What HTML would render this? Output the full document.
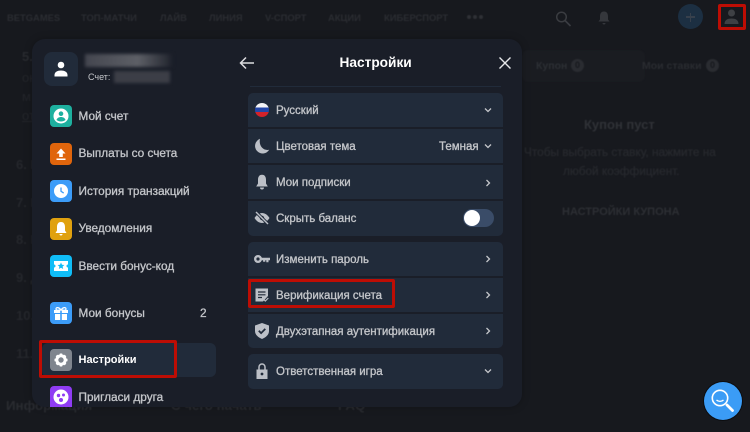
<!DOCTYPE html>
<html lang="ru"><head><meta charset="utf-8"><style>
html,body{margin:0;padding:0}
body{width:750px;height:432px;overflow:hidden;background:#17191e;position:relative;font-family:"Liberation Sans",sans-serif;}
#soft{position:absolute;left:0;top:0;width:750px;height:432px;filter:blur(.3px)}
#back{position:absolute;left:0;top:0;width:750px;height:432px;filter:blur(.6px)}
.a{position:absolute;white-space:nowrap}
.bg{color:#2b2d32;font-weight:bold;font-size:9.4px;top:12px}
.d{color:#2b2d32;font-weight:bold;font-size:13px}
#m{position:absolute;left:32px;top:39px;width:490px;height:368px;background:#1a1e28;border-radius:13px;box-shadow:0 0 8px rgba(0,0,0,.25)}
.ic{position:absolute;left:50px;width:22px;height:22px;border-radius:4px}
.ic svg,.ri svg{position:absolute;left:0;top:0}
.t{position:absolute;left:78.5px;color:#c4c6ca;font-size:11.8px;-webkit-text-stroke:.3px #c4c6ca;white-space:nowrap;line-height:16px}
.r{position:absolute;left:248px;width:255px;background:#212b3a}
.rt{position:absolute;left:276px;color:#c4c6ca;font-size:11.5px;-webkit-text-stroke:.3px #c4c6ca;white-space:nowrap;line-height:16px;margin-top:1px}
.ri{position:absolute;left:253px;width:18px;height:18px}
.ch{position:absolute;left:484px;width:8px;height:8px}
.box{position:absolute;border:3px solid #bd0d04;border-radius:2px;box-sizing:border-box}
.n{position:absolute;width:13px;height:13px;border-radius:50%;background:#2a2c31;color:#17191e;font-size:9px;font-weight:bold;line-height:13px;text-align:center}
</style></head><body>
<div id="soft">
<div id="back">
<div class="a bg" style="left:7px">BETGAMES</div>
<div class="a bg" style="left:81px">ТОП-МАТЧИ</div>
<div class="a bg" style="left:160px">ЛАЙВ</div>
<div class="a bg" style="left:209px">ЛИНИЯ</div>
<div class="a bg" style="left:265px">V-СПОРТ</div>
<div class="a bg" style="left:328px">АКЦИИ</div>
<div class="a bg" style="left:384px">КИБЕРСПОРТ</div>
<div class="a" style="left:467px;top:15px;width:4px;height:4px;border-radius:50%;background:#2f3136;box-shadow:6px 0 #2f3136,12px 0 #2f3136"></div>
<div class="a" style="left:522px;top:50px;width:123px;height:32px;background:#1a1c21;border-radius:6px"></div>
<div class="a d" style="left:536px;top:60px;font-size:10.5px;color:#2c2f34">Купон</div>
<div class="n" style="left:571px;top:59px">0</div>
<div class="a d" style="left:642px;top:60px;font-size:10.5px;color:#2a2c31">Мои ставки</div>
<div class="n" style="left:706px;top:59px">0</div>
<div class="a d" style="left:584px;top:117px;color:#303237">Купон пуст</div>
<div class="a d" style="left:524px;top:145px;font-size:11.8px;color:#27292e;font-weight:normal;-webkit-text-stroke:.3px #27292e">Чтобы выбрать ставку, нажмите на</div>
<div class="a d" style="left:563px;top:164px;font-size:11.8px;color:#27292e;font-weight:normal;-webkit-text-stroke:.3px #27292e">любой коэффициент.</div>
<div class="a d" style="left:562px;top:206px;font-size:11px;color:#2d2f34">НАСТРОЙКИ КУПОНА</div>
<div class="a d" style="left:22px;top:49px;color:#292b30">5.</div>
<div class="a d" style="left:22px;top:70px;font-weight:normal;color:#24262b">он</div>
<div class="a d" style="left:22px;top:89px;font-weight:normal;color:#24262b">м</div>
<div class="a d" style="left:22px;top:108px;font-weight:normal;color:#24262b;text-decoration:underline">от</div>
<div class="a d" style="left:16px;top:157px;color:#25272c">6. В</div>
<div class="a d" style="left:16px;top:195px;color:#25272c">7. П</div>
<div class="a d" style="left:16px;top:232px;color:#25272c">8. И</div>
<div class="a d" style="left:16px;top:270px;color:#25272c">9. Д</div>
<div class="a d" style="left:16px;top:308px;color:#25272c">10.</div>
<div class="a d" style="left:16px;top:346px;color:#25272c">11.</div>
<div class="a" style="left:6px;top:398px;font-size:13.3px;font-weight:bold;color:#2a2c31">Информация</div>
<div class="a" style="left:171px;top:398px;font-size:13.3px;font-weight:bold;color:#2a2c31">С чего начать</div>
<div class="a" style="left:338px;top:398px;font-size:13.3px;font-weight:bold;color:#2a2c31">FAQ</div>
</div>
<svg class="a" style="left:555px;top:10px" width="17" height="17" viewBox="0 0 17 17"><circle cx="6.5" cy="7" r="4.800" fill="none" stroke="#3a3c41" stroke-width="1.500"/><path d="M10 10.500l5.500 5.500" stroke="#3a3c41" stroke-width="1.700"/></svg>
<svg class="a" style="left:596px;top:10px" width="16" height="16" viewBox="0 0 16 16"><path d="M8 1.500c-3 0-4 2.400-4 5v3l-1.500 2h11L12 9.500v-3c0-2.600-1-5-4-5zM6.500 13h3a1.500 1.500 0 01-3 0z" fill="#35373c"/></svg>
<div class="a" style="left:678px;top:4px;width:25px;height:25px;border-radius:50%;background:#1c2f42"></div>
<div class="a" style="left:686px;top:16px;width:9px;height:1.500px;background:#37404c"></div>
<div class="a" style="left:689.700px;top:12.500px;width:1.500px;height:9px;background:#37404c"></div>
<svg class="a" style="left:721px;top:6px" width="21" height="20" viewBox="0 0 21 20"><circle cx="10.500" cy="7" r="3.500" fill="#3e4044"/><path d="M3.500 18c0-4 3-5.500 7-5.500s7 1.500 7 5.500z" fill="#3e4044"/></svg>
<div class="box" style="left:717.500px;top:4px;width:28px;height:26px"></div>

<div id="m"></div>
<div class="a" style="left:44px;top:52px;width:34px;height:34px;border-radius:8px;background:#212b3a"></div>
<svg class="a" style="left:54px;top:61px" width="14" height="16" viewBox="0 0 14 16"><circle cx="7" cy="4" r="3.300" fill="#fff"/><path d="M.5 15.500v-1.500c0-3 3-4.500 6.500-4.500s6.500 1.500 6.500 4.500v1.500z" fill="#fff"/></svg>
<div class="a" style="left:85px;top:54px;width:88px;height:13px;background:linear-gradient(90deg,#44464f,#5d5f66 60%,#2c2f38 92%,#1a1e28);filter:blur(1.500px)"></div>
<div class="a" style="left:88px;top:70px;color:#c4c6ca;font-size:9px;line-height:14px">Счет:</div>
<div class="a" style="left:114px;top:71px;width:56px;height:12px;background:#3c3e47;filter:blur(1.500px)"></div>

<div class="ic" style="top:105px;background:#1eb09f"><svg width="22" height="22" viewBox="0 0 22 22"><circle cx="11" cy="11" r="7.500" fill="#fff"/><circle cx="11" cy="8.700" r="2.300" fill="#1eb09f"/><path d="M6.500 15c.5-2 2.500-3 4.500-3s4 1 4.500 3c-2.500 2-6.500 2-9 0z" fill="#1eb09f"/></svg></div>
<div class="t" style="top:107.500px">Мой счет</div>
<div class="ic" style="top:142.500px;background:#e0650c"><svg width="22" height="22" viewBox="0 0 22 22"><path d="M11 5.500l4.500 5h-2.700V14H9.200v-3.500H6.500z" fill="#fff"/><rect x="6.500" y="15.500" width="9" height="1.500" fill="#fff"/></svg></div>
<div class="t" style="top:145px">Выплаты со счета</div>
<div class="ic" style="top:180px;background:#3c9cf8"><svg width="22" height="22" viewBox="0 0 22 22"><circle cx="11" cy="11" r="7" fill="#fff"/><path d="M11 7.500v3.800l2.700 1.800" fill="none" stroke="#3c9cf8" stroke-width="1.300"/></svg></div>
<div class="t" style="top:182.500px">История транзакций</div>
<div class="ic" style="top:217.500px;background:#e0a10f"><svg width="22" height="22" viewBox="0 0 22 22"><path d="M11 4c-3 0-4 2.500-4 5v3.500L5.500 15h11L15 12.500V9c0-2.500-1-5-4-5zM9.500 16h3a1.500 1.500 0 01-3 0z" fill="#fff"/></svg></div>
<div class="t" style="top:220px">Уведомления</div>
<div class="ic" style="top:255px;background:#10bdf7"><svg width="22" height="22" viewBox="0 0 22 22"><path d="M4 6h14v3.500a1.500 1.500 0 000 3V16H4v-3.500a1.500 1.500 0 000-3z" fill="#fff"/><path d="M11 7.500l1 2.300 2.400.2-1.800 1.600.6 2.400-2.200-1.300-2.200 1.300.6-2.400L7.600 10l2.400-.2z" fill="#10bdf7"/></svg></div>
<div class="t" style="top:257.500px">Ввести бонус-код</div>
<div class="ic" style="top:302px;background:#3c9cf8"><svg width="22" height="22" viewBox="0 0 22 22"><path d="M4 8h14v3H4zM5 12h12v6H5z" fill="#fff"/><rect x="10.200" y="8" width="1.600" height="10" fill="#3c9cf8"/><path d="M11 8c-2-3-5-3-5-1s3 1 5 1zm0 0c2-3 5-3 5-1s-3 1-5 1z" fill="none" stroke="#fff" stroke-width="1.200"/></svg></div>
<div class="t" style="top:304.500px">Мои бонусы</div>
<div class="t" style="top:304.500px;left:200px">2</div>
<div class="a" style="left:42px;top:343px;width:174px;height:34px;border-radius:6px;background:#212b3a"></div>
<div class="ic" style="top:349px;background:#7f858e"><svg width="22" height="22" viewBox="0 0 22 22"><circle cx="11" cy="11" r="4.200" fill="none" stroke="#fff" stroke-width="3"/><path d="M11 4.500v2.500M11 15v2.500M4.500 11h2.500M15 11h2.500M6.500 6.500l1.800 1.800M13.700 13.700l1.800 1.800M15.500 6.500l-1.800 1.800M8.300 13.700l-1.800 1.800" stroke="#fff" stroke-width="2.400"/></svg></div>
<div class="t" style="top:351.500px;color:#fff;font-weight:bold;-webkit-text-stroke:0;font-size:11px">Настройки</div>
<div class="box" style="left:39px;top:339.500px;width:138px;height:38px"></div>
<div class="ic" style="top:386px;height:21px;border-radius:4px 4px 0 0;background:#8f3cf4"><svg width="22" height="21" viewBox="0 0 22 21"><circle cx="11" cy="11" r="7.500" fill="#fff"/><circle cx="8.500" cy="9.500" r="1.700" fill="#8f3cf4"/><circle cx="13.500" cy="9" r="1.500" fill="#8f3cf4"/><circle cx="11" cy="14" r="2" fill="#8f3cf4"/></svg></div>
<div class="t" style="top:389px">Пригласи друга</div>

<svg class="a" style="left:238px;top:55px" width="18" height="16" viewBox="0 0 18 16"><path d="M16 8H2.500M8 2.500L2.500 8 8 13.500" fill="none" stroke="#dcdde0" stroke-width="1.500"/></svg>
<div class="a" style="left:339.500px;top:54px;color:#fff;font-weight:bold;font-size:13.700px;line-height:18px">Настройки</div>
<svg class="a" style="left:498px;top:56px" width="14" height="14" viewBox="0 0 14 14"><path d="M1.500 1.500l11 11M12.500 1.500l-11 11" stroke="#e6e7e9" stroke-width="1.400"/></svg>
<div class="a" style="left:250px;top:86px;width:251px;height:1px;background:#212b3a"></div>

<div class="r" style="top:93px;height:34px;border-radius:5px 5px 0 0"></div>
<div class="r" style="top:129px;height:34px"></div>
<div class="r" style="top:165px;height:34px"></div>
<div class="r" style="top:201px;height:35px;border-radius:0 0 5px 5px"></div>
<div class="r" style="top:242px;height:34px;border-radius:5px 5px 0 0"></div>
<div class="r" style="top:278px;height:34px"></div>
<div class="r" style="top:314px;height:34px;border-radius:0 0 5px 5px"></div>
<div class="r" style="top:354px;height:35px;border-radius:5px"></div>

<div class="a" style="left:255px;top:103px;width:14px;height:14px;border-radius:50%;background:linear-gradient(#f4f4f6 0 33%,#2346a8 33% 66%,#d3222a 66%)"></div>
<div class="rt" style="top:102px">Русский</div>
<svg class="ri" style="top:137px" width="18" height="18" viewBox="0 0 18 18"><path d="M7 1.800a7.600 7.600 0 109.200 11C10 14 5.500 8.500 7 1.800z" fill="#bcc0c7"/></svg>
<div class="rt" style="top:138px">Цветовая тема</div>
<svg class="ri" style="top:173px" width="18" height="18" viewBox="0 0 18 18"><path d="M9 1.800c-3 0-4 2.500-4 5v3.700L3.200 13.500h11.600L13 10.500V6.800c0-2.500-1-5-4-5zM7 14.500h4a2 2 0 01-4 0z" fill="#bcc0c7"/></svg>
<div class="rt" style="top:174px">Мои подписки</div>
<svg class="ri" style="top:209px" width="18" height="18" viewBox="0 0 18 18"><path d="M1.500 9c2-3.300 4.700-5 7.500-5s5.500 1.700 7.500 5c-2 3.300-4.700 5-7.500 5s-5.500-1.700-7.500-5z" fill="#bcc0c7"/><circle cx="9" cy="9" r="2.200" fill="#212b3a"/><path d="M3 3l12 12" stroke="#212b3a" stroke-width="3.200"/><path d="M3 3l12 12" stroke="#bcc0c7" stroke-width="1.400"/></svg>
<div class="rt" style="top:210px">Скрыть баланс</div>
<svg class="ri" style="top:250px" width="18" height="18" viewBox="0 0 18 18"><circle cx="5" cy="9" r="2.800" fill="none" stroke="#bcc0c7" stroke-width="2.400"/><path d="M7.500 7.700h9.500v2.600h-1.500v2h-2.200v-2h-1v1.500h-2.200v-1.500H7.500z" fill="#bcc0c7"/></svg>
<div class="rt" style="top:251px">Изменить пароль</div>
<svg class="ri" style="top:286px" width="18" height="18" viewBox="0 0 18 18"><path d="M2.500 2.500h12.500v7.500l-5 5.500H2.500z" fill="#bcc0c7"/><path d="M5 6h7.500M5 8.800h7.500M5 11.500h4" stroke="#212b3a" stroke-width="1.200"/><path d="M10.800 13.500l1.500 1.500 3-3" fill="none" stroke="#bcc0c7" stroke-width="1.200"/></svg>
<div class="rt" style="top:287px">Верификация счета</div>
<svg class="ri" style="top:322px" width="18" height="18" viewBox="0 0 18 18"><path d="M9 1l7 2.500v5.500c0 3.500-2.800 6.300-7 8-4.200-1.700-7-4.500-7-8V3.500z" fill="#bcc0c7"/><path d="M5.800 8.800l2.300 2.300 4.200-4.200" fill="none" stroke="#212b3a" stroke-width="1.800"/></svg>
<div class="rt" style="top:323px">Двухэтапная аутентификация</div>
<svg class="ri" style="top:362px" width="18" height="18" viewBox="0 0 18 18"><path d="M3.500 7.500h11V17h-11z" fill="#bcc0c7"/><path d="M6 7.500V5a3 3 0 016 0v2.500" fill="none" stroke="#bcc0c7" stroke-width="1.500"/><circle cx="9" cy="12" r="1.400" fill="#212b3a"/></svg>
<div class="rt" style="top:363px">Ответственная игра</div>

<div class="rt" style="top:138px;left:439px">Темная</div>
<svg class="ch" style="top:106px" viewBox="0 0 8 8"><path d="M1 2.500l3 3 3-3" fill="none" stroke="#c4c6ca" stroke-width="1.300"/></svg>
<svg class="ch" style="top:142px" viewBox="0 0 8 8"><path d="M1 2.500l3 3 3-3" fill="none" stroke="#c4c6ca" stroke-width="1.300"/></svg>
<svg class="ch" style="top:178.500px" viewBox="0 0 8 8"><path d="M2.500 1l3 3-3 3" fill="none" stroke="#c4c6ca" stroke-width="1.300"/></svg>
<svg class="ch" style="top:255px" viewBox="0 0 8 8"><path d="M2.500 1l3 3-3 3" fill="none" stroke="#c4c6ca" stroke-width="1.300"/></svg>
<svg class="ch" style="top:291px" viewBox="0 0 8 8"><path d="M2.500 1l3 3-3 3" fill="none" stroke="#c4c6ca" stroke-width="1.300"/></svg>
<svg class="ch" style="top:327px" viewBox="0 0 8 8"><path d="M2.500 1l3 3-3 3" fill="none" stroke="#c4c6ca" stroke-width="1.300"/></svg>
<svg class="ch" style="top:367px" viewBox="0 0 8 8"><path d="M1 2.500l3 3 3-3" fill="none" stroke="#c4c6ca" stroke-width="1.300"/></svg>
<div class="a" style="left:463px;top:209px;width:31px;height:18px;border-radius:9px;background:#3a4c68"></div>
<div class="a" style="left:464px;top:210px;width:16px;height:16px;border-radius:50%;background:#fff"></div>
<div class="box" style="left:248px;top:279px;width:147px;height:29px"></div>

<div class="a" style="left:704px;top:382px;width:38px;height:38px;border-radius:50%;background:#3b9cf6;box-shadow:0 0 0 1px #0c0d10"></div>
<svg class="a" style="left:704px;top:382px" width="38" height="38" viewBox="0 0 38 38"><circle cx="16" cy="16" r="7.700" fill="none" stroke="#fff" stroke-width="1.600"/><path d="M12.500 18c2 1.800 5 1.800 7 0" fill="none" stroke="#fff" stroke-width="1.300"/><path d="M23 23l5.500 5.500" stroke="#fff" stroke-width="2.800" stroke-linecap="round"/></svg>
</div>
</body></html>
